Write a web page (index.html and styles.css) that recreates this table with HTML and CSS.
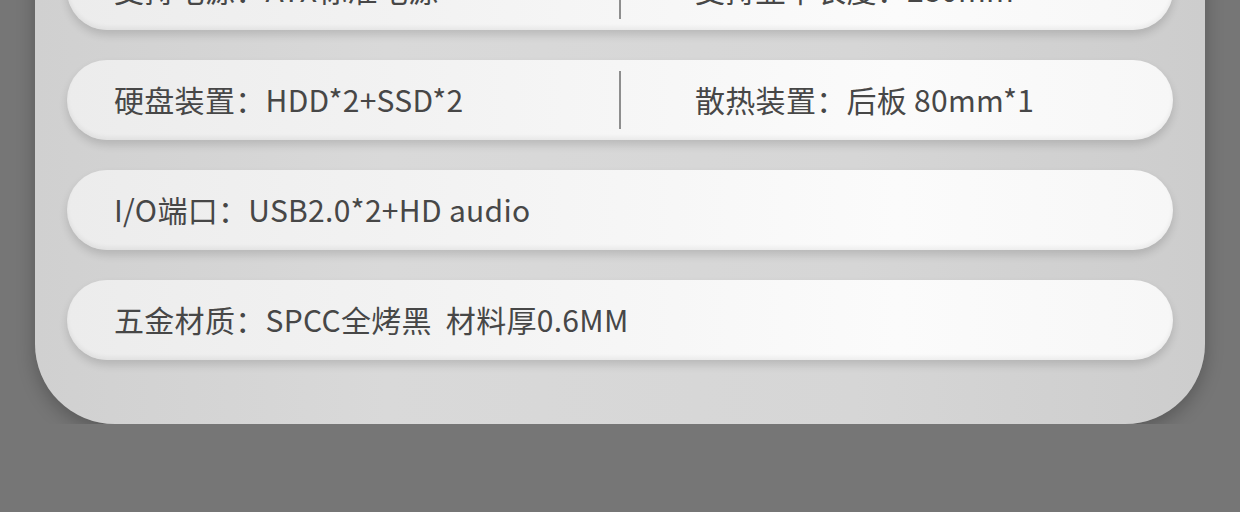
FILE: index.html
```html
<!DOCTYPE html>
<html lang="zh-CN">
<head>
    <meta charset="UTF-8">
    <meta name="viewport" content="width=device-width, initial-scale=1.0">
    <title>产品参数</title>
    <link rel="stylesheet" href="styles.css">
</head>
<body>
    <div class="spec-card">
        <!-- 电源 / 显卡 -->
        <div class="spec-row spec-row-split">
            <div class="spec-cell">支持电源：ATX标准电源</div>
            <div class="spec-divider"></div>
            <div class="spec-cell spec-cell-right">支持显卡长度：280mm</div>
        </div>

        <!-- 硬盘 / 散热 -->
        <div class="spec-row spec-row-split">
            <div class="spec-cell">硬盘装置：HDD*2+SSD*2</div>
            <div class="spec-divider"></div>
            <div class="spec-cell spec-cell-right">散热装置：后板 80mm*1</div>
        </div>

        <div class="spec-row">
            <div class="spec-cell">I/O端口：USB2.0*2+HD audio</div>
        </div>

        <div class="spec-row">
            <div class="spec-cell">五金材质：SPCC全烤黑&nbsp; 材料厚0.6MM</div>
        </div>
    </div>
</body>
</html>
```

FILE: styles.css
```css
body {
    margin: 0;
    background-color: #767676;
    font-family: "Noto Sans CJK SC", "Noto Sans", sans-serif;
    overflow: hidden;
}
.spec-card {
    margin: -80px 35px 0;
    padding: 30px 32px 64px;
    display: flex;
    flex-direction: column;
    gap: 30px;
    background: linear-gradient(90deg, #d0d0d0 0%, #d9d9d9 30%, #d6d6d6 70%, #cdcdcd 100%);
    border-radius: 0 0 80px 80px;
    box-shadow: 0 6px 18px rgba(0, 0, 0, 0.25);
}
.spec-row {
    height: 80px;
    border-radius: 40px;
    display: flex;
    align-items: center;
    background: linear-gradient(90deg, #ececec 0%, #f4f4f4 40%, #fbfbfb 75%, #f7f7f7 100%);
    box-shadow: 0 5px 8px rgba(0, 0, 0, 0.14), inset 0 -3px 4px rgba(0, 0, 0, 0.05);
    color: #474747;
    font-size: 30px;
    letter-spacing: 0.3px;
}
.spec-row-split {
    display: grid;
    grid-template-columns: 1fr 2px 1fr;
}
.spec-cell {
    padding: 0 0 3px 47px;
    white-space: nowrap;
}
.spec-cell-right {
    padding-left: 74px;
}
.spec-divider {
    width: 2px;
    height: 58px;
    background-color: #8e8e8e;
}
```
